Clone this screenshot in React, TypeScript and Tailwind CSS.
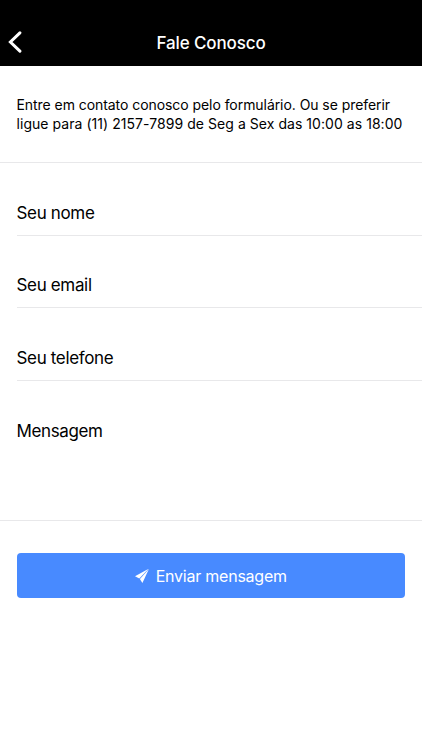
const fields = ["Seu nome", "Seu email", "Seu telefone"];

function Header() {
  return (
    <header className="relative flex h-[65.5px] items-end justify-center bg-black pb-[10.5px]">
      <button className="absolute top-[31px] left-2 text-white" aria-label="Voltar">
        <svg width="14" height="22" viewBox="0 0 14 22" fill="none" stroke="currentColor" strokeWidth="3">
          <path d="M11.9 1.8 2.4 11l9.5 9.2" strokeLinecap="round" />
        </svg>
      </button>
      <h1 className="text-[17px] leading-6 font-medium tracking-[-0.12px] text-white">Fale Conosco</h1>
    </header>
  );
}

export default function App() {
  return (
    <div className="min-h-[750px] bg-white font-['Inter',sans-serif] text-black">
      <Header />
      <section className="h-[97.5px] border-b border-[#e8e8ea] pt-[30.5px] pl-[16.5px]">
        <p className="text-[14px] leading-[18.5px] whitespace-nowrap">
          <span className="block tracking-[-0.06px]">Entre em contato conosco pelo formulário. Ou se preferir</span>
          <span className="block tracking-[0.05px]">ligue para (11) 2157-7899 de Seg a Sex das 10:00 as 18:00</span>
        </p>
      </section>
      <form>
        <div className="h-[357.5px] border-b border-[#e8e8ea] pl-[16.5px]">
          {fields.map((label) => (
            <label key={label} className="flex h-[72.5px] items-end border-b border-[#e8e8ea] pb-[10px]">
              <span className="text-[17px] leading-6 tracking-[-0.34px]">{label}</span>
            </label>
          ))}
          <label className="block pt-[38px] text-[17px] leading-6 tracking-[-0.38px]">Mensagem</label>
        </div>
        <button
          type="button"
          className="mx-[16.5px] mt-[32.5px] flex h-[45px] w-[388.5px] items-center justify-center gap-[7px] rounded bg-[#488aff] text-white"
        >
          <svg width="14" height="14" viewBox="0 0 14 14" fill="currentColor">
            <path d="M13.6-.2 0 7.2l4.3 2.2z" />
            <path d="M13.9 0 7.4 14 4.9 9.9z" />
          </svg>
          <span className="text-[16px] leading-6 tracking-[-0.23px]">Enviar mensagem</span>
        </button>
      </form>
    </div>
  );
}
